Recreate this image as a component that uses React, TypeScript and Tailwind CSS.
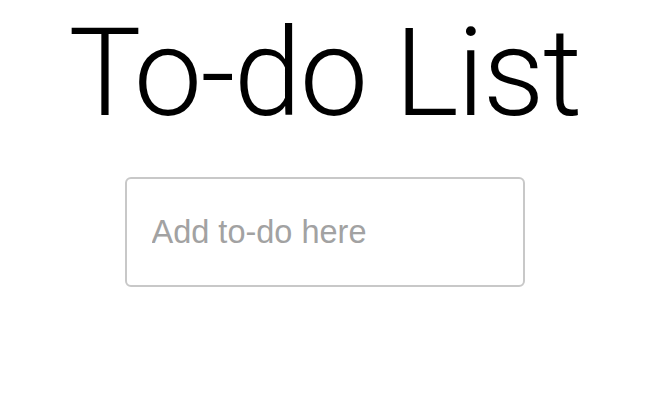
import React from "react";

export default function App() {
  return (
    <div className="min-h-[410px] w-full bg-white">
      <div className="flex w-[649px] flex-col items-center">
        <h1
          className="mt-0 text-[122px] leading-[148px] font-light tracking-[-1.7px] text-black"
          style={{ fontFamily: "Roboto, 'Liberation Sans', sans-serif" }}
        >
          To-do List
        </h1>
        <input
          type="text"
          placeholder="Add to-do here"
          className="mt-[29px] h-[110px] w-[400px] rounded-[6px] border-2 border-[#c8c8c8] bg-white pl-[25px] text-[32.5px] text-black outline-none placeholder:text-[#a2a2a2]"
          style={{ fontFamily: "'Liberation Sans', Arial, sans-serif" }}
        />
      </div>
    </div>
  );
}
